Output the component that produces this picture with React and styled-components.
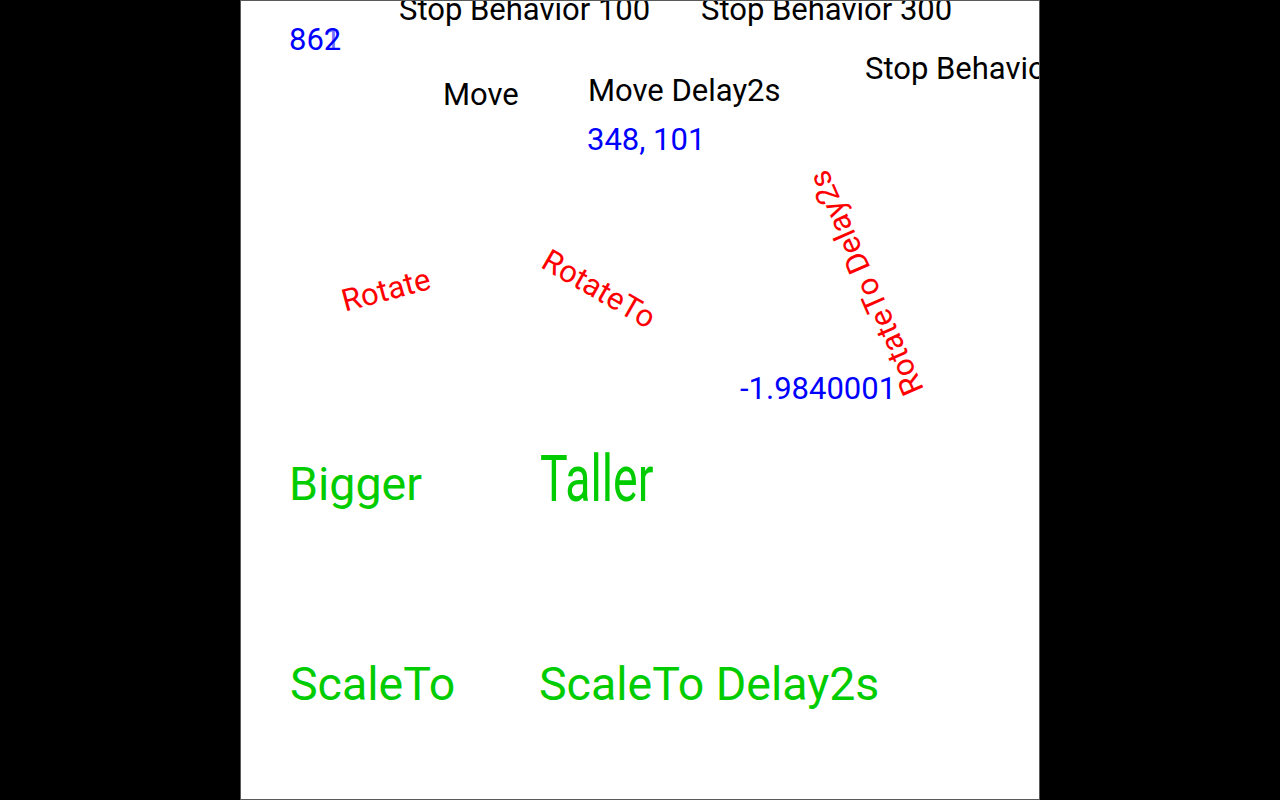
import React from 'react';
import styled, { createGlobalStyle } from 'styled-components';

const GlobalStyle = createGlobalStyle`
  html, body {
    margin: 0;
    padding: 0;
    background: #000;
    overflow: hidden;
  }
`;

const Screen = styled.div`
  width: 1280px;
  height: 800px;
  background: #000;
  display: flex;
  justify-content: center;
  font-family: Roboto, "Noto Sans", sans-serif;
`;

// the scene is a free canvas: each actor keeps its own coordinates on it
const Stage = styled.div`
  position: relative;
  width: 800px;
  height: 800px;
  box-sizing: border-box;
  border: 1px solid #5a5a5a;
  background: #fff;
  overflow: hidden;
`;

const colors = {
  black: '#000000',
  blue: '#0000ff',
  red: '#ff0000',
  green: '#00cc00',
};

const Actor = styled.span`
  position: absolute;
  left: ${(p) => p.$x}px;
  top: ${(p) => p.$y}px;
  font-size: ${(p) => p.$size || 31}px;
  line-height: 1;
  white-space: nowrap;
  color: ${(p) => colors[p.$tone || 'black']};
`;

const Spinner = styled(Actor)`
  transform: translate(-50%, -50%) rotate(${(p) => p.$angle}deg);
  transform-origin: center;
`;

const Stretched = styled(Actor)`
  transform: scaleY(${(p) => p.$sy});
  transform-origin: 0 39px;
`;

const Digit = styled.span`
  position: relative;
  display: inline-block;
`;

const Ghost = styled.span`
  position: absolute;
  left: 0;
  top: 0;
  opacity: 0.55;
`;

const App = () => {
  return (
    <Screen>
      <GlobalStyle />
      <Stage>
        <Actor $tone="blue" $x={48} $y={23}>
          86
          <Digit>
            2<Ghost>1</Ghost>
          </Digit>
        </Actor>

        <Actor $x={158} $y={-7}>Stop Behavior 100</Actor>
        <Actor $x={460} $y={-7}>Stop Behavior 300</Actor>
        <Actor $x={624} $y={52}>Stop Behavior 500</Actor>

        <Actor $x={202} $y={78}>Move</Actor>
        <Actor $x={347} $y={74}>Move Delay2s</Actor>
        <Actor $tone="blue" $x={346} $y={123}>348, 101</Actor>

        <Spinner $tone="red" $x={145} $y={289} $angle={-15}>Rotate</Spinner>
        <Spinner $tone="red" $x={358} $y={288} $angle={30}>RotateTo</Spinner>
        <Spinner $tone="red" $x={625} $y={282} $angle={-113.68}>RotateTo Delay2s</Spinner>
        <Actor $tone="blue" $x={499} $y={372}>-1.9840001</Actor>

        <Actor $tone="green" $size={46.5} $x={48} $y={460}>Bigger</Actor>
        <Stretched $tone="green" $size={46.5} $sy={1.39} $x={299} $y={461}>Taller</Stretched>

        <Actor $tone="green" $size={46.5} $x={49} $y={660}>ScaleTo</Actor>
        <Actor $tone="green" $size={46.5} $x={298} $y={660}>ScaleTo Delay2s</Actor>
      </Stage>
    </Screen>
  );
};

export default App;
